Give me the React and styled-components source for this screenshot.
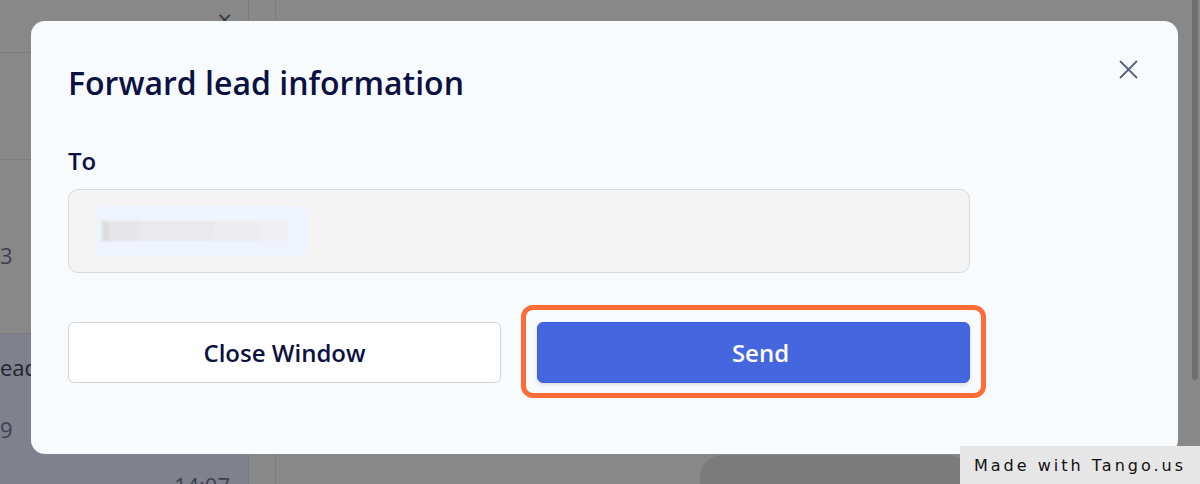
import styled, { createGlobalStyle } from "styled-components";

const GlobalStyle = createGlobalStyle`
  html, body {
    margin: 0;
    padding: 0;
    height: 484px;
    overflow: hidden;
    background: #888888;
    font-family: "Open Sans", "Noto Sans", sans-serif;
  }
`;

// dimmed app behind the modal
const Page = styled.div`
  position: relative;
  width: 1200px;
  height: 484px;
  display: flex;
  background: #888888;
  overflow: hidden;
`;

const Sidebar = styled.div`
  width: 248px;
  display: flex;
  flex-direction: column;
  border-right: 1px solid #7d7d7d;
`;

const SideHeader = styled.div`
  height: 53px;
  border-bottom: 1px solid #7f7f7f;
  display: flex;
  justify-content: flex-end;
  align-items: flex-start;
  padding: 6px 16px 0 0;
  box-sizing: border-box;
  color: #3a3a3a;
  font-size: 26px;
  line-height: 1;
`;

const SideSearch = styled.div`
  height: 107px;
  border-bottom: 1px solid #7f7f7f;
`;

const SideItem = styled.div`
  height: ${(p) => p.h}px;
  background: ${(p) => (p.active ? "#7f818d" : "transparent")};
  border-bottom: ${(p) => (p.active ? "none" : "1px solid #7f7f7f")};
  display: flex;
  flex-direction: column;
  gap: ${(p) => p.gap || 0}px;
  padding: ${(p) => p.pad};
  box-sizing: border-box;
`;

const SideText = styled.span`
  font-size: 22px;
  line-height: 30px;
  color: ${(p) => (p.dark ? "#23242f" : "#3d4050")};
  align-self: ${(p) => (p.right ? "flex-end" : "flex-start")};
  margin-right: ${(p) => (p.right ? 18 : 0)}px;
  margin-top: ${(p) => (p.right ? -6 : 0)}px;
`;

const Gutter = styled.div`
  width: 26px;
  border-right: 1px solid #7d7d7d;
`;

const Main = styled.div`
  flex: 1;
  display: flex;
  justify-content: flex-end;
`;

const Scrollbar = styled.div`
  width: 6px;
  height: 380px;
  margin-right: 2px;
  background: #6e6e6e;
  border-radius: 0 0 3px 3px;
`;

const Bubble = styled.div`
  position: absolute;
  left: 700px;
  top: 455px;
  width: 270px;
  height: 60px;
  border-radius: 22px;
  background: #7b7b7b;
`;

const Modal = styled.div`
  position: absolute;
  left: 31px;
  top: 21px;
  width: 1147px;
  height: 433px;
  box-sizing: border-box;
  background: #f7fbfe;
  border-radius: 14px;
  padding: 40px 37px 0 37px;
  display: flex;
  flex-direction: column;
`;

const Title = styled.h2`
  margin: 0;
  font-size: 32px;
  font-weight: 600;
  color: #0b1140;
  line-height: 44px;
`;

const CloseIcon = styled.button`
  position: absolute;
  top: 36px;
  right: 38px;
  width: 24px;
  height: 24px;
  padding: 0;
  border: none;
  background: none;
  display: flex;
  align-items: center;
  justify-content: center;
`;

const Form = styled.div`
  width: 902px;
  display: flex;
  flex-direction: column;
  margin-top: 40px;
`;

const Label = styled.label`
  font-size: 24px;
  font-weight: 600;
  color: #0b1140;
  line-height: 32px;
`;

const InputBox = styled.div`
  margin-top: 12px;
  height: 84px;
  box-sizing: border-box;
  background: #f4f4f4;
  border: 1px solid #d8d8d8;
  border-radius: 10px;
  display: flex;
  align-items: center;
  padding-left: 26px;
`;

const Chip = styled.div`
  width: 213px;
  height: 50px;
  border-radius: 8px;
  background: #eef3fd;
  display: flex;
  align-items: center;
  padding-left: 7px;
  box-sizing: border-box;
`;

const Blur = styled.div`
  width: 186px;
  height: 20px;
  background: linear-gradient(
    90deg,
    #dcdcdc 0 4%,
    #e6e6e8 4% 20%,
    #e9e9ee 20% 60%,
    #ececf1 60% 85%,
    #f0f0f3 85% 100%
  );
  filter: blur(1px);
`;

const Actions = styled.div`
  margin-top: 49px;
  display: grid;
  grid-template-columns: 433px 433px;
  justify-content: space-between;
`;

const Button = styled.button`
  height: 61px;
  border-radius: 6px;
  padding: 0 0 0 ${(p) => (p.primary ? 14 : 0)}px;
  font-family: "Open Sans", "Noto Sans", sans-serif;
  font-size: 24px;
  font-weight: 600;
  cursor: pointer;
  border: 1px solid ${(p) => (p.primary ? "#3f5fdb" : "#d3d3d3")};
  background: ${(p) => (p.primary ? "#4466df" : "#ffffff")};
  color: ${(p) => (p.primary ? "#ffffff" : "#0b1140")};
  box-shadow: ${(p) => (p.primary ? "0 2px 4px rgba(0,0,0,0.12)" : "none")};
`;

const Highlight = styled.div`
  position: relative;
  &::after {
    content: "";
    position: absolute;
    left: -16px;
    top: -17px;
    right: -16px;
    bottom: -15px;
    border: 5px solid #ff6c37;
    border-radius: 12px;
    pointer-events: none;
  }
  ${Button} {
    width: 100%;
  }
`;

const Badge = styled.div`
  position: absolute;
  right: 0;
  bottom: 0;
  width: 240px;
  height: 38px;
  background: #e6e6e6;
  display: flex;
  align-items: center;
  justify-content: center;
  font-family: "DejaVu Sans", sans-serif;
  font-size: 16px;
  letter-spacing: 3px;
  color: #111;
`;

export default function App() {
  return (
    <>
      <GlobalStyle />
      <Page>
        <Sidebar>
          <SideHeader>×</SideHeader>
          <SideSearch />
          <SideItem h={175} pad="80px 0 0 0">
            <SideText>3</SideText>
          </SideItem>
          <SideItem active h={150} pad="18px 0 0 0" gap={32}>
            <SideText dark>ead</SideText>
            <SideText>9</SideText>
            <SideText right>14:07</SideText>
          </SideItem>
        </Sidebar>
        <Gutter />
        <Main>
          <Scrollbar />
        </Main>
        <Bubble />

        <Modal>
          <Title>Forward lead information</Title>
          <CloseIcon aria-label="Close">
            <svg width="19" height="19" viewBox="0 0 19 19">
              <path
                d="M1.5 1.5 L17.5 17.5 M17.5 1.5 L1.5 17.5"
                stroke="#5b6079"
                strokeWidth="1.8"
                strokeLinecap="round"
              />
            </svg>
          </CloseIcon>
          <Form>
            <Label>To</Label>
            <InputBox>
              <Chip>
                <Blur />
              </Chip>
            </InputBox>
            <Actions>
              <Button>Close Window</Button>
              <Highlight>
                <Button primary>Send</Button>
              </Highlight>
            </Actions>
          </Form>
        </Modal>

        <Badge>Made with Tango.us</Badge>
      </Page>
    </>
  );
}
